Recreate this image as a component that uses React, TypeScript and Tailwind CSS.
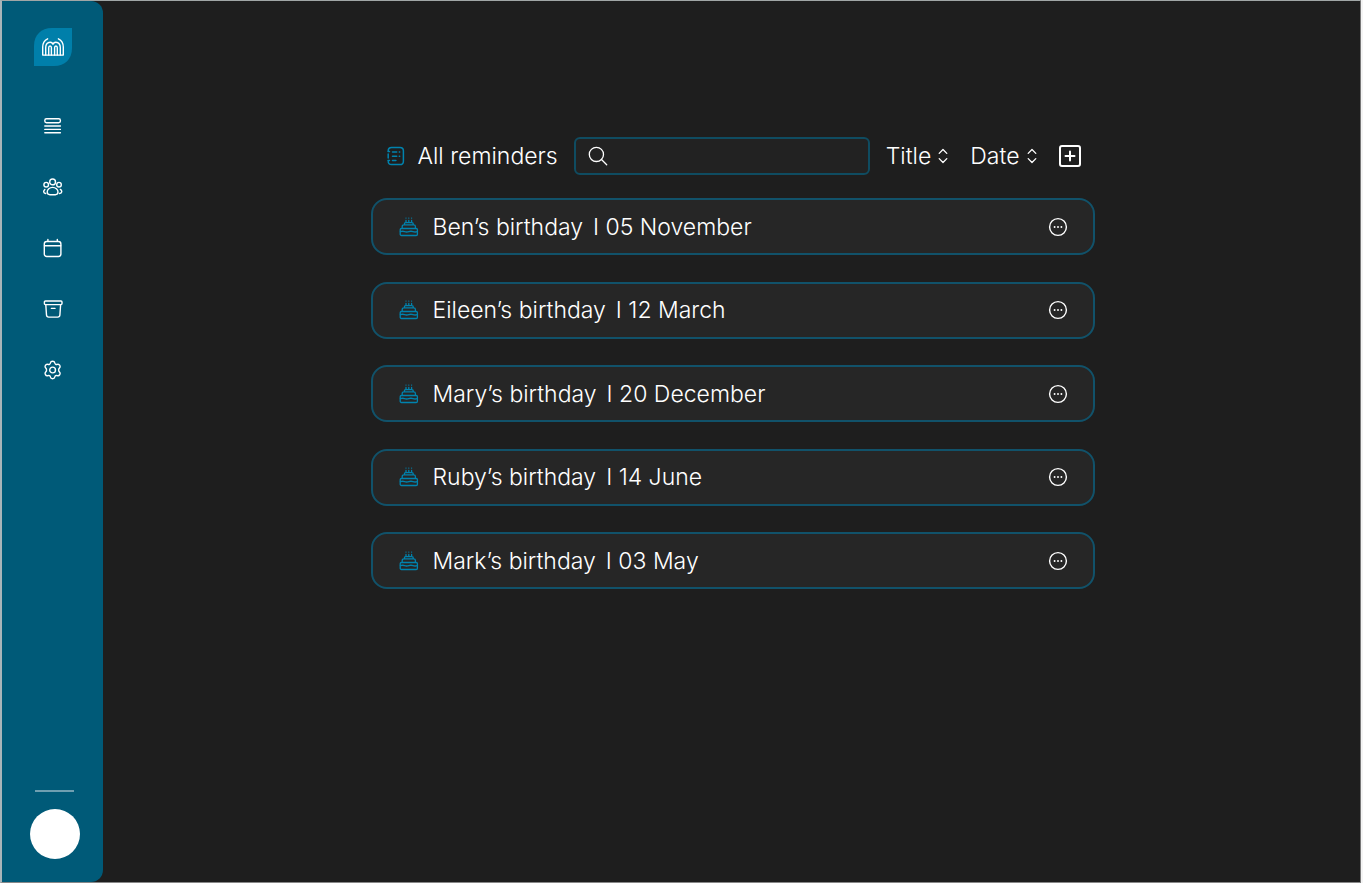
import React from "react";

type IconProps = { className?: string; children: React.ReactNode; width?: number };

function Icon({ className = "size-5", children, width = 1.4 }: IconProps) {
  return (
    <svg
      viewBox="0 0 20 20"
      className={`shrink-0 ${className}`}
      fill="none"
      stroke="currentColor"
      strokeWidth={width}
      strokeLinecap="round"
      strokeLinejoin="round"
      aria-hidden="true"
    >
      {children}
    </svg>
  );
}

const navItems = [
  {
    label: "Feed",
    icon: (
      <>
        <rect x="1.8" y="2.7" width="15.6" height="4" rx="1.7" />
        <path d="M1.8 10h15.6M1.8 13.4h15.6M1.8 16.8h15.6" />
      </>
    ),
  },
  {
    label: "People",
    icon: (
      <>
        <circle cx="9.6" cy="4.9" r="2.9" />
        <circle cx="3.2" cy="7.7" r="2.3" />
        <circle cx="16" cy="7.7" r="2.3" />
        <path d="M9.6 10.4c-3 0-5.4 2.2-5.4 4.7 0 1.7 1.2 2.6 2.7 2.6h5.4c1.5 0 2.7-.9 2.7-2.6 0-2.5-2.4-4.7-5.4-4.7Z" />
        <path d="M1.8 12.4c-1.6 1.6-1.6 3.7.9 4.1M17.4 12.4c2 1.6 1.8 3.7-.9 4.1" />
      </>
    ),
  },
  {
    label: "Calendar",
    icon: (
      <>
        <rect x="1.3" y="3.5" width="16.6" height="15" rx="2.4" />
        <path d="M1.5 7.8h16.2M4.9 3.3V1.4M14.3 3.3V1.4" />
      </>
    ),
  },
  {
    label: "Archive",
    icon: (
      <>
        <rect x="1.4" y="2" width="17.6" height="3.6" rx="1" />
        <path d="M2.8 5.8 3.5 16c.1 1.4.9 2.1 2.2 2.1h9c1.3 0 2.1-.7 2.2-2.1l.7-10.2M8.4 9.4H12" />
      </>
    ),
  },
  {
    label: "Settings",
    icon: (
      <>
        <path d="M7.4 3c.4-2.3 4-2.3 4.4 0 .2 1.2 1.3 1.8 2.4 1.4 2.2-.8 4 2.2 2.2 3.7-1 .8-1 3 0 3.8 1.8 1.5 0 4.5-2.2 3.7-1.1-.4-2.2.2-2.4 1.4-.4 2.3-4 2.3-4.4 0-.2-1.2-1.3-1.8-2.4-1.4-2.2.8-4-2.2-2.2-3.7 1-.8 1-3 0-3.8-1.8-1.5 0-4.5 2.2-3.7 1.1.4 2.2-.2 2.4-1.4Z" />
        <circle cx="9.6" cy="10" r="2.9" />
      </>
    ),
  },
];

const reminders = [
  { title: "Ben’s birthday", date: "05 November" },
  { title: "Eileen’s birthday", date: "12 March" },
  { title: "Mary’s birthday", date: "20 December" },
  { title: "Ruby’s birthday", date: "14 June" },
  { title: "Mark’s birthday", date: "03 May" },
];

function Logo() {
  return (
    <svg viewBox="0 0 38 38" className="size-[38px]" fill="none" aria-hidden="true">
      <path d="M0 38V18C0 7 7 0 18 0h20v20c0 11-7 18-18 18Z" fill="#007faa" />
      <g stroke="#fff" strokeWidth="1.4" strokeLinecap="round" strokeLinejoin="round">
        <path d="M13.6 10.8c-3.1 1.5-4.9 4.5-4.9 8.3v8h20.6v-8c0-3.8-1.8-6.8-4.9-8.3" />
        <path d="M11.7 27v-7.3c0-6 6-6.7 7.3-3.5 1.3-3.2 7.3-2.5 7.3 3.5V27" />
        <path d="M14.7 27v-7.2c0-2.5 2.7-2.5 2.7 0V27M20.6 27v-7.2c0-2.5 2.7-2.5 2.7 0V27" />
      </g>
    </svg>
  );
}

function CakeIcon() {
  return (
    <Icon className="size-5 text-[#0083ae]" width={1.3}>
      <rect x="1.2" y="11.5" width="17.2" height="7" rx="1.2" />
      <path d="M1.4 14.6c1.4-.5 2.8-.5 4.2 0s2.8.5 4.2 0 2.8-.5 4.2 0 2.8.5 4.2 0" />
      <path d="M3.2 11.2V9.6c0-1.1.7-1.7 1.7-1.7h9.8c1 0 1.7.6 1.7 1.7v1.6M5.3 7.7v-.5c0-1 .6-1.6 1.5-1.6h6c.9 0 1.5.6 1.5 1.6v.5" />
      <path d="M7 5V3.4M9.8 5V3.4M12.6 5V3.4M7 1.1h.01M9.8 1.1h.01M12.6 1.1h.01" />
    </Icon>
  );
}

function SortButton({ label }: { label: string }) {
  return (
    <button type="button" className="flex items-center gap-[7px]">
      {label}
      <svg
        viewBox="0 0 10 16"
        className="h-4 w-2.5"
        fill="none"
        stroke="currentColor"
        strokeWidth="1.3"
        strokeLinecap="round"
        strokeLinejoin="round"
        aria-hidden="true"
      >
        <path d="m1.2 5.4 3.8-3.9 3.8 3.9M1.2 10.6 5 14.5l3.8-3.9" />
      </svg>
    </button>
  );
}

export default function App() {
  return (
    <div className="flex min-h-screen bg-[#f4f4f4] pr-0.5 font-['Inter',sans-serif] text-[23px] leading-7 font-[350] text-white">
      <div className="flex flex-1 border-t border-r border-b border-l-2 border-t-[#a0a6a6] border-r-[#777] border-b-[#888] border-l-[#a9b5b9] bg-[#1e1e1e]">
        <aside className="flex w-[101px] shrink-0 flex-col items-center rounded-r-xl bg-[#005a78] pt-[27px] pb-[23px]">
          <a href="#home" aria-label="Home">
            <Logo />
          </a>
          <nav className="mt-[50px] flex flex-col gap-[41px]">
            {navItems.map((item) => (
              <a key={item.label} href={`#${item.label.toLowerCase()}`} aria-label={item.label}>
                <Icon>{item.icon}</Icon>
              </a>
            ))}
          </nav>
          <div className="mt-auto ml-1 flex flex-col items-center gap-[17px]">
            <div className="h-0.5 w-[39px] bg-[#6f9fb1]" />
            <button type="button" aria-label="Profile" className="size-[50px] rounded-full bg-white" />
          </div>
        </aside>

        <main className="flex flex-1 flex-col items-center pt-[136px] pr-6 pl-[26px]">
          <div className="w-full max-w-[724px]">
            <header className="flex items-center pr-3.5 pl-[15px]">
              <h1 className="flex items-center gap-3">
                <Icon className="size-5 text-[#0083ae]" width={1.5}>
                  <path d="M2.2 5.3v-.5c0-2.200 1.200-3.400 3.400-3.400h8.400c2.200 0 3.400 1.200 3.400 3.400v10.400c0 2.200-1.200 3.400-3.400 3.400H5.600c-2.200 0-3.400-1.200-3.400-3.400v-.5M2.200 8v4M2 5.500h1.500M2 14.500h1.500" />
                  <path d="M6.500 6h4.200M13.300 6h.4M6.500 10.200h4.200M13.300 10.200h.4M6.500 14.400h3.400" />
                </Icon>
                All reminders
              </h1>
              <label className="ml-4 flex h-[38px] min-w-0 flex-1 items-center gap-3 rounded-md border-2 border-[#0f4c61] bg-[#222] px-3">
                <Icon className="size-5" width={1.3}>
                  <circle cx="8.4" cy="8.4" r="7.1" />
                  <path d="m13.500 13.500 5.200 5.200" />
                </Icon>
                <input type="search" aria-label="Search reminders" className="min-w-0 flex-1 bg-transparent outline-none" />
              </label>
              <div className="ml-4 flex items-center gap-[22px]">
                <SortButton label="Title" />
                <SortButton label="Date" />
                <button type="button" aria-label="Add reminder">
                  <svg
                    viewBox="0 0 22 22"
                    className="size-[22px]"
                    fill="none"
                    stroke="currentColor"
                    strokeWidth="2"
                    strokeLinecap="round"
                    aria-hidden="true"
                  >
                    <rect x="1" y="1" width="20" height="20" rx="2" />
                    <path d="M11 6.5v9M6.5 11h9" />
                  </svg>
                </button>
              </div>
            </header>

            <ul className="mt-[23px] flex min-h-[391px] flex-col justify-between">
              {reminders.map((reminder) => (
                <li
                  key={reminder.title}
                  className="flex h-[57px] items-center rounded-2xl border-2 border-[#11526a] bg-[#262626] pr-[25px] pl-[26px]"
                >
                  <CakeIcon />
                  <p className="ml-3.5 flex gap-2.5">
                    <span>{reminder.title}</span>
                    <span>I {reminder.date}</span>
                  </p>
                  <button type="button" aria-label={`Options for ${reminder.title}`} className="ml-auto">
                    <Icon className="size-5" width={1.4}>
                      <circle cx="10" cy="10" r="8.4" />
                      <path d="M6.6 10h.01M10 10h.01M13.4 10h.01" strokeWidth="1.9" />
                    </Icon>
                  </button>
                </li>
              ))}
            </ul>
          </div>
        </main>
      </div>
    </div>
  );
}
